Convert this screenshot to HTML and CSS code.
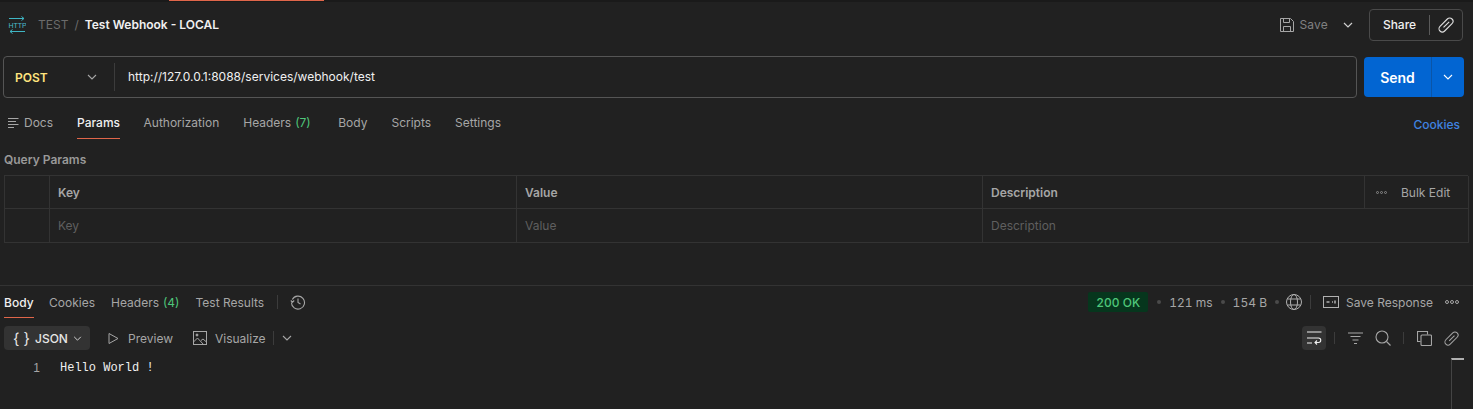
FILE: index.html
```html
<!DOCTYPE html>
<html lang="en">
<head>
  <meta charset="UTF-8">
  <title>Test Webhook - LOCAL</title>
  <link rel="stylesheet" href="styles.css">
</head>
<body>
  <div class="top-strip"><span class="top-accent"></span></div>

  <header class="title-bar">
    <div class="crumbs">
      <svg class="http-icon" width="18" height="18" viewBox="0 0 18 18" fill="none" stroke="#3fb6c4" stroke-width="1">
        <path d="M1 2.500h15M13.500 .5l2.500 2-2.500 2M17 15.500h-15M4.500 13.500l-2.500 2 2.500 2"/>
        <text x="0.5" y="11.500" class="http-text">HTTP</text>
      </svg>
      <span class="crumb-parent">TEST</span>
      <span class="crumb-sep">/</span>
      <span class="crumb-name">Test Webhook - LOCAL</span>
    </div>
    <div class="title-actions">
      <svg width="16" height="16" viewBox="0 0 16 16" fill="none" stroke="#a6a6a6">
        <path d="M1.500 1.500h10l3 3v10h-13zM4.500 1.500v4h6v-4M4.500 14.500v-5h7v5"/>
      </svg>
      <span class="save-label">Save</span>
      <svg class="save-caret" width="10" height="6" viewBox="0 0 10 6" fill="none" stroke="#d0d0d0" stroke-width="1.200"><path d="M1 1l4 4 4-4"/></svg>
      <div class="share-box">
        <span class="share-label">Share</span>
        <span class="share-link">
          <svg width="16" height="16" viewBox="0 0 16 16" fill="none" stroke="#e0e0e0" stroke-width="1.100">
            <g transform="rotate(45 8 8)"><rect x="4.700" y="-.5" width="6.600" height="17" rx="3.300"/><path d="M8 3.500v8"/></g>
          </svg>
        </span>
      </div>
    </div>
  </header>

  <div class="request-row">
    <div class="url-box">
      <div class="method">
        <span class="method-name">POST</span>
        <svg width="10" height="6" viewBox="0 0 10 6" fill="none" stroke="#a6a6a6" stroke-width="1.100"><path d="M1 1l4 4 4-4"/></svg>
      </div>
      <div class="url-text">http://127.0.0.1:8088/services/webhook/test</div>
    </div>
    <div class="send-group">
      <span class="send-label">Send</span>
      <span class="send-caret">
        <svg width="10" height="6" viewBox="0 0 10 6" fill="none" stroke="#fff" stroke-width="1.100"><path d="M1 1l4 4 4-4"/></svg>
      </span>
    </div>
  </div>

  <nav class="req-tabs">
    <span class="tab docs-tab">
      <svg width="11" height="10" viewBox="0 0 11 10" fill="none" stroke="#a6a6a6"><path d="M0 .5h10.500M0 3.500h8M0 6.500h10.500M0 9.500h6"/></svg>
      Docs
    </span>
    <span class="tab tab-active">Params</span>
    <span class="tab">Authorization</span>
    <span class="tab tab-headers">Headers <em class="count">(7)</em></span>
    <span class="tab">Body</span>
    <span class="tab">Scripts</span>
    <span class="tab">Settings</span>
    <span class="cookies-link">Cookies</span>
  </nav>

  <div class="query-title">Query Params</div>

  <div class="params-table">
    <div class="cell"></div>
    <div class="cell cell-head">Key</div>
    <div class="cell cell-head">Value</div>
    <div class="cell cell-head">Description</div>
    <div class="cell cell-bulk"><span class="dots dots-small"><i></i><i></i><i></i></span><span class="bulk-label">Bulk Edit</span></div>
    <div class="cell cell-low"></div>
    <div class="cell cell-low cell-hint">Key</div>
    <div class="cell cell-low cell-hint">Value</div>
    <div class="cell cell-low cell-hint cell-wide">Description</div>
  </div>

  <section class="response">
    <div class="res-tabs">
      <span class="res-tab res-tab-active">Body</span>
      <span class="res-tab">Cookies</span>
      <span class="res-tab">Headers <em class="count">(4)</em></span>
      <span class="res-tab">Test Results</span>
      <span class="vsep vsep-history"></span>
      <svg class="history-icon" width="16" height="16" viewBox="0 0 16 16" fill="none" stroke="#a6a6a6" stroke-width="1.100">
        <path d="M2.300 5.500A6.500 6.500 0 1 1 1.500 8.500M.8 6.500l1.700 1.700 1.700-1.700M8 4.500V8.500l2.500 1.500"/>
      </svg>
      <div class="res-meta">
        <span class="status-pill">200 OK</span>
        <span class="meta-dot"></span>
        <span class="meta-text">121 ms</span>
        <span class="meta-dot"></span>
        <span class="meta-text">154 B</span>
        <span class="meta-dot meta-dot-last"></span>
        <svg width="16" height="16" viewBox="0 0 16 16" fill="none" stroke="#b0b0b0"><circle cx="8" cy="8" r="7.500"/><ellipse cx="8" cy="8" rx="3.500" ry="7.500"/><path d="M1.300 5h13.400M1.300 11h13.400"/></svg>
        <span class="vsep"></span>
        <svg width="16" height="12" viewBox="0 0 16 12" fill="none" stroke="#b0b0b0"><rect x=".5" y=".5" width="15" height="11"/><path d="M3.500 6h3M9 6h1M12 4.500v3" stroke-width="1.500"/></svg>
        <span class="save-response">Save Response</span>
        <span class="dots"><i></i><i></i><i></i></span>
      </div>
    </div>

    <div class="res-toolbar">
      <span class="format-btn"><span class="braces">{ }</span> JSON
        <svg width="9" height="5" viewBox="0 0 10 6" fill="none" stroke="#d0d0d0" stroke-width="1.200"><path d="M1 1l4 4 4-4"/></svg>
      </span>
      <span class="view-btn">
        <svg width="11" height="13" viewBox="0 0 11 13" fill="none" stroke="#a6a6a6"><path d="M1 1.500l9 5-9 5z"/></svg>
        Preview
      </span>
      <span class="view-btn view-visual">
        <svg width="14" height="14" viewBox="0 0 14 14" fill="none" stroke="#a6a6a6"><rect x=".5" y=".5" width="13" height="13"/><path d="M.5 11l4-4 6 6.500M8 9.500l2-1.500 3.500 3"/><circle cx="4" cy="4" r="1" fill="#a6a6a6"/></svg>
        Visualize
      </span>
      <span class="vsep vsep-view"></span>
      <svg class="view-caret" width="10" height="6" viewBox="0 0 10 6" fill="none" stroke="#a6a6a6" stroke-width="1.100"><path d="M1 1l4 4 4-4"/></svg>
      <div class="tool-icons">
        <span class="wrap-btn">
          <svg width="15" height="14" viewBox="0 0 15 14" fill="none" stroke="#f0f0f0" stroke-width="1.100"><path d="M0 1h14.500M0 7h11.500a2 2 0 0 1 0 4.500H8M10 9.500l-2 2 2 2M0 12h5"/></svg>
        </span>
        <span class="vsep"></span>
        <svg class="icon-filter" width="15" height="12" viewBox="0 0 15 12" fill="none" stroke="#a6a6a6" stroke-width="1.100"><path d="M0 1h15M2.500 4.500h10M4.500 8h6M6 11.500h3"/></svg>
        <svg class="icon-search" width="16" height="16" viewBox="0 0 16 16" fill="none" stroke="#a6a6a6" stroke-width="1.100"><circle cx="7" cy="7" r="6"/><path d="M11.500 11.500l4 4"/></svg>
        <span class="vsep"></span>
        <svg class="icon-copy" width="15" height="15" viewBox="0 0 15 15" fill="none" stroke="#a6a6a6" stroke-width="1.100"><path d="M3.500 10.500h-3v-10h10v3"/><rect x="4" y="4" width="10.500" height="10.500" rx="1"/></svg>
        <svg class="icon-link" width="15" height="15" viewBox="0 0 16 16" fill="none" stroke="#a6a6a6" stroke-width="1.100">
          <g transform="rotate(45 8 8)"><rect x="4.700" y="-.5" width="6.600" height="17" rx="3.300"/><path d="M8 3.500v8"/></g>
        </svg>
      </div>
    </div>

    <div class="editor">
      <span class="line-no">1</span>
      <span class="code-line">Hello World !</span>
      <span class="scroll-mark"></span>
    </div>
  </section>
</body>
</html>
```

FILE: styles.css
```css
* { box-sizing: border-box; }
html, body { margin: 0; height: 409px; overflow: hidden; }
body { background: #212121; color: #a6a6a6; font-family: Inter, "Liberation Sans", sans-serif; font-size: 12px; }
svg { display: block; flex: none; }
em { font-style: normal; }

.top-strip { height: 2px; background: #1a1a1a; padding-left: 169px; }
.top-accent { display: block; width: 155px; height: 1px; background: #e0664a; }

.title-bar { height: 46px; display: flex; align-items: center; justify-content: space-between; padding: 0 10px 0 8px; }
.crumbs { display: flex; align-items: center; padding-bottom: 1px; }
.http-text { font-family: "Liberation Sans", sans-serif; font-size: 7px; fill: #4bbccb; stroke: none; }
.crumb-parent { margin-left: 12px; color: #6b6b6b; }
.crumb-sep { margin: 0 6px; color: #6b6b6b; }
.crumb-name { color: #f0f0f0; font-weight: 600; }
.title-actions { display: flex; align-items: center; }
.save-label { margin-left: 4px; color: #808080; letter-spacing: .2px; padding-bottom: 1px; }
.save-caret { margin: 0 16px 0 15px; }
.share-box { width: 94px; height: 32px; border: 1px solid #4a4a4a; border-radius: 4px; display: flex; align-items: center; color: #f0f0f0; }
.share-label { width: 59px; text-align: center; font-weight: 500; padding-bottom: 1px; }
.share-link { height: 20px; flex: 1; border-left: 1px solid #5a5a5a; display: flex; align-items: center; justify-content: center; }

.request-row { display: flex; align-items: center; gap: 7px; padding: 0 9px 0 3px; height: 42px; margin-top: 8px; }
.url-box { flex: 1; height: 42px; border: 1px solid #555; border-radius: 4px; display: flex; align-items: center; }
.method { width: 111px; height: 28px; border-right: 1px solid #3c3c3c; display: flex; align-items: center; justify-content: space-between; padding: 0 17px 0 11px; }
.method-name { color: #ffe47e; font-weight: 600; }
.url-text { margin-left: 13px; color: #f0f0f0; padding-bottom: 1px; }
.send-group { width: 100px; height: 40px; background: #0265d2; border-radius: 4px; display: flex; align-items: center; color: #fff; font-size: 14px; font-weight: 600; }
.send-label { width: 67px; text-align: center; }
.send-caret { flex: 1; height: 100%; border-left: 1px solid #0a55a8; display: flex; align-items: center; justify-content: center; }

.req-tabs { height: 33px; margin-top: 8px; padding: 0 9px 0 8px; display: flex; align-items: stretch; }
.tab { display: flex; align-items: center; gap: 4px; margin-right: 24px; height: 33px; }
.docs-tab { gap: 5px; }
.tab-active { color: #f0f0f0; font-weight: 500; box-shadow: inset 0 -1px 0 #e0664a; margin-right: 23.5px; }
.tab-headers { margin-right: 27.5px; }
.count { color: #4fc67a; }
.cookies-link { margin-left: auto; align-self: center; color: #3f83e0; font-weight: 500; padding-top: 4px; padding-right: 4px; }

.query-title { height: 21px; margin-top: 12px; padding-left: 4px; line-height: 18px; font-weight: 600; color: #999; }

.params-table { margin: 3px 5px 0 4px; display: grid; grid-template-columns: 45px 467px 466px 382px 104px; border-top: 1px solid #333; border-left: 1px solid #333; }
.cell { height: 33px; border-right: 1px solid #333; border-bottom: 1px solid #333; padding-left: 8px; display: flex; align-items: center; }
.cell-low { height: 34px; }
.cell-head { font-weight: 600; color: #a6a6a6; }
.cell-hint { color: #5f5f5f; }
.cell-wide { grid-column: span 2; }
.cell-bulk { gap: 14px; padding-left: 11px; color: #a6a6a6; }
.dots { display: inline-flex; gap: 1px; }
.dots i { width: 4px; height: 4px; border: 1px solid #a6a6a6; border-radius: 50%; }
.dots-small i { width: 3px; height: 3px; border-color: #888; }

.response { margin-top: 42px; border-top: 1px solid #333; }
.res-tabs { height: 32px; display: flex; align-items: center; padding: 0 14px 0 4px; }
.res-tab { height: 32px; display: flex; align-items: center; gap: 4px; margin-right: 16px; }
.res-tab-active { color: #f0f0f0; font-weight: 500; box-shadow: inset 0 -1px 0 #e0664a; margin-right: 15.5px; }
.vsep { display: block; width: 1px; height: 14px; background: #3c3c3c; flex: none; }
.vsep-history { margin-left: -3px; }
.history-icon { margin-left: 12px; }
.res-meta { margin-left: auto; display: flex; align-items: center; }
.status-pill { height: 20px; width: 60px; background: #06361d; color: #4fc67a; border-radius: 2px; font-weight: 500; font-variant-numeric: tabular-nums; display: flex; align-items: center; justify-content: center; margin-right: 9px; }
.meta-dot { width: 4px; height: 4px; border-radius: 50%; background: #4a4a4a; margin-right: 8px; }
.meta-dot-last { margin-right: 7px; }
.meta-text { margin-right: 8px; font-variant-numeric: tabular-nums; }
.res-meta .vsep { margin: 0 12px 0 8px; }
.save-response { margin: 0 12px 0 7px; }

.res-toolbar { height: 24px; margin-top: 8px; padding: 0 14px 0 4px; display: flex; align-items: center; }
.format-btn { width: 86px; height: 24px; background: #333; border-radius: 4px; color: #e6e6e6; font-weight: 500; display: flex; align-items: center; gap: 5px; padding-left: 9px; }
.braces { font-size: 15px; font-weight: 400; }
.view-btn { display: flex; align-items: center; gap: 9px; margin-left: 18px; }
.view-visual { gap: 8px; margin-left: 20px; }
.vsep-view { margin-left: 7px; }
.view-caret { margin-left: 8px; }
.tool-icons { margin-left: auto; display: flex; align-items: center; }
.wrap-btn { width: 24px; height: 24px; background: #333; border-radius: 4px; display: flex; align-items: center; justify-content: center; }
.tool-icons .vsep { height: 12px; margin: 0 13px 0 8px; }
.icon-search { margin: 0 4px 0 12px; }
.icon-copy { margin-right: 12px; }

.editor { position: relative; height: 59px; padding-top: 10px; display: flex; font-family: "Liberation Mono", monospace; font-size: 12px; line-height: 16px; }
.line-no { width: 60px; padding-right: 20px; text-align: right; color: #a6a6a6; font-family: "Liberation Sans", sans-serif; }
.code-line { color: #f0f0f0; }
.scroll-mark { position: absolute; left: 1451px; top: 8px; width: 13px; height: 51px; border-top: 2px solid #b0b0b0; border-left: 1px solid #444; }
```
